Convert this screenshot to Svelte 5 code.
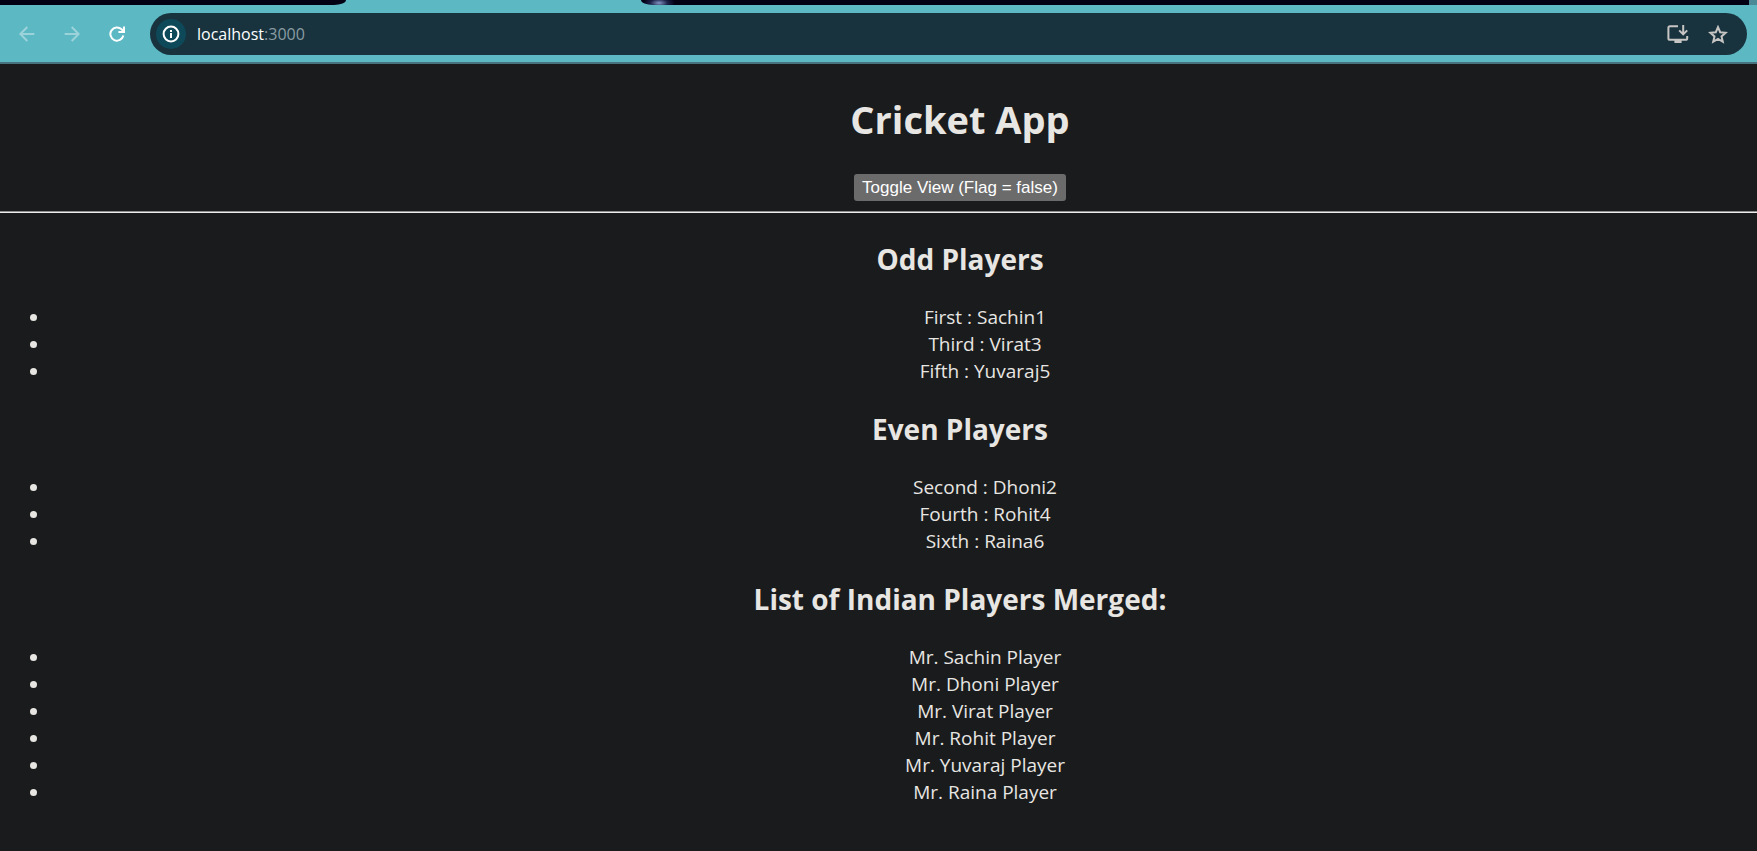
<script>
  let flag = $state(false);

  const groups = [
    { title: 'Odd Players', players: ['First : Sachin1', 'Third : Virat3', 'Fifth : Yuvaraj5'] },
    { title: 'Even Players', players: ['Second : Dhoni2', 'Fourth : Rohit4', 'Sixth : Raina6'] },
    {
      title: 'List of Indian Players Merged:',
      players: [
        'Mr. Sachin Player',
        'Mr. Dhoni Player',
        'Mr. Virat Player',
        'Mr. Rohit Player',
        'Mr. Yuvaraj Player',
        'Mr. Raina Player'
      ]
    }
  ];
</script>

<div class="window">
  <header class="browser">
    <div class="tabs">
      <div class="strip left"></div>
      <div class="active-tab"></div>
      <div class="strip right"></div>
      <div class="edge"></div>
    </div>
    <div class="toolbar">
      <nav class="nav">
        <button class="icon faded" aria-label="Back">
          <svg viewBox="0 0 16 16"><path d="M15.3 8H1.5M8.3 1L1.3 8l7 7" /></svg>
        </button>
        <button class="icon faded" aria-label="Forward">
          <svg viewBox="0 0 16 16"><path d="M.7 8h13.8M7.7 1l7 7-7 7" /></svg>
        </button>
        <button class="icon reload" aria-label="Reload">
          <svg viewBox="0 0 16 16"><path d="M14.4 9.6A6.6 6.6 0 1 1 12.6 3.3L14.6 5.3M15 .6V5.9H9.4" /></svg>
        </button>
      </nav>
      <div class="omnibox">
        <button class="info" aria-label="Site information">
          <svg viewBox="0 0 18 18"><circle cx="9" cy="9" r="7.4" /><path d="M9 8v5M9 5v2" /></svg>
        </button>
        <span class="url">localhost<span class="port">:3000</span></span>
        <button class="icon action" aria-label="Install app">
          <svg class="install" viewBox="0 0 22 18">
            <path d="M11 1.2H3Q1.4 1.2 1.4 2.8V13.2Q1.4 14.8 3 14.8H18.6Q20.2 14.8 20.2 13.2V11" />
            <path d="M16.2 0v8.6M12.2 5.4l4 4 4-4" />
            <path class="stand" d="M7.4 14.5h7.2V18H7.4z" />
          </svg>
        </button>
        <button class="icon action" aria-label="Bookmark">
          <svg class="star" viewBox="0 0 20 19"><path d="M10 2.1l2.2 5.1 5.5.5-4.2 3.7 1.3 5.4L10 14l-4.8 2.8 1.3-5.4L2.3 7.7l5.5-.5z" /></svg>
        </button>
      </div>
    </div>
  </header>

  <main class="page">
    <h1>Cricket App</h1>
    <button class="toggle" onclick={() => (flag = !flag)}>Toggle View (Flag = {String(flag)})</button>
    <hr />
    {#each groups as group}
      <h2>{group.title}</h2>
      <ul>
        {#each group.players as player}
          <li>{player}</li>
        {/each}
      </ul>
    {/each}
  </main>
</div>

<style>
  :global(body) {
    margin: 0;
    background: #191b1c;
  }
  .window {
    min-height: 100vh;
    overflow: hidden;
    background: #191b1c;
    color: #e8e6e3;
    font-family: 'Segoe UI', 'Open Sans', 'Noto Sans', sans-serif;
  }
  .browser {
    background: #5cb8c3;
    border-bottom: 2px solid #47727e;
  }
  .tabs {
    display: flex;
    height: 5px;
  }
  .strip {
    background: #030014;
  }
  .left {
    width: 346px;
    border-bottom-right-radius: 12px 5px;
  }
  .active-tab {
    width: 295px;
  }
  .right {
    flex: 1;
    border-bottom-left-radius: 12px 5px;
    background: radial-gradient(ellipse 16px 7px at 18px 3px, #8495c4, #1b2147 55%, #030014);
  }
  .edge {
    width: 8px;
    background: #4c8996;
  }
  .toolbar {
    display: flex;
    align-items: center;
    gap: 25px;
    padding: 8px 10px 7px 19px;
  }
  .nav {
    display: flex;
    gap: 29px;
  }
  .icon,
  .info {
    display: flex;
    align-items: center;
    justify-content: center;
    padding: 0;
    border: 0;
    background: none;
    color: #fff;
  }
  svg {
    width: 16px;
    height: 16px;
    fill: none;
    stroke: currentColor;
    stroke-width: 2;
  }
  .faded {
    color: #9cd3db;
  }
  .omnibox {
    flex: 1;
    display: flex;
    align-items: center;
    height: 42px;
    padding: 0 19px 0 6px;
    border-radius: 21px;
    background: #18333e;
  }
  .info {
    width: 30px;
    height: 30px;
    border-radius: 50%;
    background: #0e4959;
  }
  .info svg {
    width: 18px;
    height: 18px;
  }
  .url {
    flex: 1;
    margin-left: 11px;
    color: #fff;
    font-size: 16px;
    line-height: 24px;
  }
  .port {
    color: #8a9ca3;
  }
  .action {
    margin-left: 19px;
    color: #c6c5c4;
  }
  .install {
    width: 22px;
    height: 18px;
  }
  .star {
    width: 20px;
    height: 19px;
  }
  .stand {
    fill: currentColor;
    stroke: none;
  }
  /* The document is wider than the visible window and runs past its right edge. */
  .page {
    display: flow-root;
    margin-right: -163px;
    text-align: center;
    font-size: 19px;
    line-height: 27px;
  }
  h1 {
    margin: 29px 0 28px;
    font-size: 38px;
    line-height: 53px;
  }
  .toggle {
    display: block;
    margin: 0 auto;
    padding: 2px 8px;
    border: 0;
    border-radius: 3px;
    background: #6b6b6b;
    color: #fff;
    font: 17px/23px 'Liberation Sans', Arial, sans-serif;
  }
  hr {
    margin: 10px 0 26px;
    border: 0;
    border-top: 1px solid #8f8f90;
    border-bottom: 1px solid #eeeeee;
  }
  h2 {
    margin: 24px 0 25px;
    font-size: 28px;
    line-height: 40px;
  }
  ul {
    margin: 0;
    padding-left: 50px;
  }
</style>
